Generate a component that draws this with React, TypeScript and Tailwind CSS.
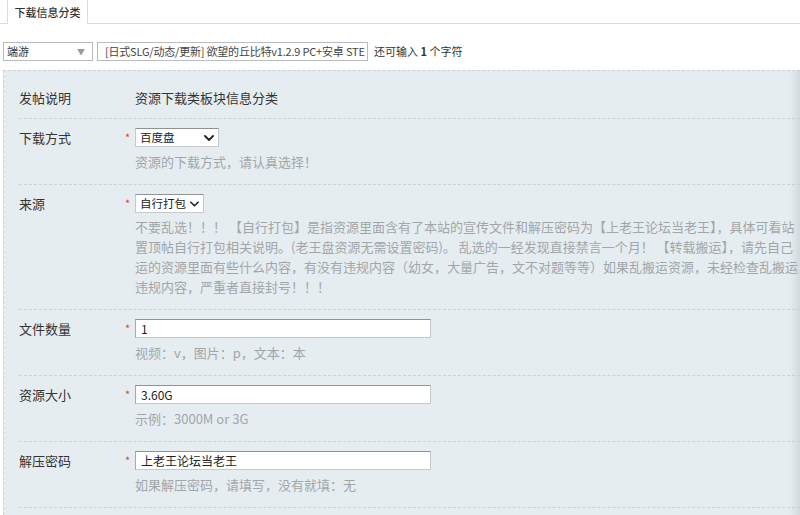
import React from "react";

const Chevron = ({ className = "" }: { className?: string }) => (
  <svg viewBox="0 0 10 6" className={className} fill="none">
    <path d="M1 1l4 4 4-4" stroke="#222" strokeWidth="1.8" strokeLinecap="round" strokeLinejoin="round" />
  </svg>
);

const Req = () => <span className="w-[10px] shrink-0 pt-[2px] text-[11px] leading-[14px] text-[#e53b3b]">*</span>;

const Hint = ({ children }: { children: React.ReactNode }) => (
  <div className="mt-[5px] whitespace-nowrap text-[13px] leading-[20px] text-[#a2a6a9]">{children}</div>
);

const TextInput = ({ value }: { value: string }) => (
  <div className="h-[19px] w-[296px] border border-[#c6c9cc] border-t-[#8f9397] border-l-[#a6aaad] bg-white pl-[5px] text-[12px] leading-[17px] text-[#222]">
    {value}
  </div>
);

const Row = ({ label, children }: { label: string; children: React.ReactNode }) => (
  <div className="flex border-b border-dashed border-[#cbd3da] pt-[9px] pb-[12px]">
    <div className="w-[106px] shrink-0 text-[13px] leading-[19px] text-[#333]">{label}</div>
    <Req />
    <div className="min-w-0 flex-1 overflow-hidden">{children}</div>
  </div>
);

const descLines = [
  "不要乱选！！！ 【自行打包】是指资源里面含有了本站的宣传文件和解压密码为【上老王论坛当老王】，具体可看站",
  "置顶帖自行打包相关说明。(老王盘资源无需设置密码)。 乱选的一经发现直接禁言一个月！ 【转载搬运】，请先自己",
  "运的资源里面有些什么内容，有没有违规内容（幼女，大量广告，文不对题等等）如果乱搬运资源，未经检查乱搬运",
  "违规内容，严重者直接封号！！！",
];

export default function App() {
  return (
    <div className="h-[515px] w-full overflow-hidden bg-white font-['Noto_Sans_CJK_SC',sans-serif]">
      {/* tab bar */}
      <div className="flex h-[24px] border-b border-[#dcdcdc] pl-[7px]">
        <div className="-mb-px h-[24px] w-[81px] border-x border-[#dcdcdc] bg-white text-center text-[11px] font-medium leading-[24px] text-[#333]">
          下载信息分类
        </div>
      </div>

      {/* type + title */}
      <div className="mt-[18px] flex items-center pl-[3px]">
        <div className="flex h-[19px] w-[90px] shrink-0 items-center justify-between border border-[#b9bcbf] bg-white pl-[3px] pr-[7px] text-[11px] text-[#333]">
          <span>端游</span>
          <span className="text-[8px] text-[#999]">▼</span>
        </div>
        <div className="ml-[4px] h-[19px] w-[271px] shrink-0 overflow-hidden whitespace-nowrap border border-[#b9bcbf] bg-white pl-[7px] text-[11px] leading-[17px] tracking-[-0.2px] text-[#444]">
          [日式SLG/动态/更新] 欲望的丘比特v1.2.9 PC+安卓 STE
        </div>
        <div className="ml-[6px] whitespace-nowrap text-[11px] text-[#333]">
          还可输入 <b>1</b> 个字符
        </div>
      </div>

      {/* form panel */}
      <div className="mt-[9px] ml-[3px] h-[460px] border-t border-l border-dashed border-[#c8d2da] bg-[#e6edf1] pl-[15px] pt-[7px] shadow-[inset_-10px_0_8px_-6px_rgba(0,0,0,0.10)]">
        <div className="flex border-b border-dashed border-[#cbd3da] py-[10px] text-[13px] leading-[20px] text-[#333]">
          <div className="w-[116px] shrink-0">发帖说明</div>
          <div>资源下载类板块信息分类</div>
        </div>

        <Row label="下载方式">
          <div className="flex h-[19px] w-[84px] items-center justify-between border border-[#c6c9cc] border-t-[#8f9397] bg-white px-[4px] text-[11.5px] text-[#222]">
            <span>百度盘</span>
            <Chevron className="h-[6px] w-[10px]" />
          </div>
          <Hint>资源的下载方式，请认真选择！</Hint>
        </Row>

        <Row label="来源">
          <div className="flex h-[19px] w-fit items-center gap-[4px] whitespace-nowrap border border-[#c6c9cc] border-t-[#8f9397] bg-white px-[4px] text-[11.5px] text-[#222]">
            <span>自行打包</span>
            <Chevron className="h-[6px] w-[9px]" />
          </div>
          <div className="mt-[4px] text-[13px] leading-[20px] text-[#a2a6a9]">
            {descLines.map((l, i) => (
              <div key={i} className="whitespace-nowrap">
                {l}
              </div>
            ))}
          </div>
        </Row>

        <Row label="文件数量">
          <TextInput value="1" />
          <Hint>视频：v，图片：p，文本：本</Hint>
        </Row>

        <Row label="资源大小">
          <TextInput value="3.60G" />
          <Hint>示例：3000M or 3G</Hint>
        </Row>

        <Row label="解压密码">
          <TextInput value="上老王论坛当老王" />
          <Hint>如果解压密码，请填写，没有就填：无</Hint>
        </Row>
      </div>
    </div>
  );
}
